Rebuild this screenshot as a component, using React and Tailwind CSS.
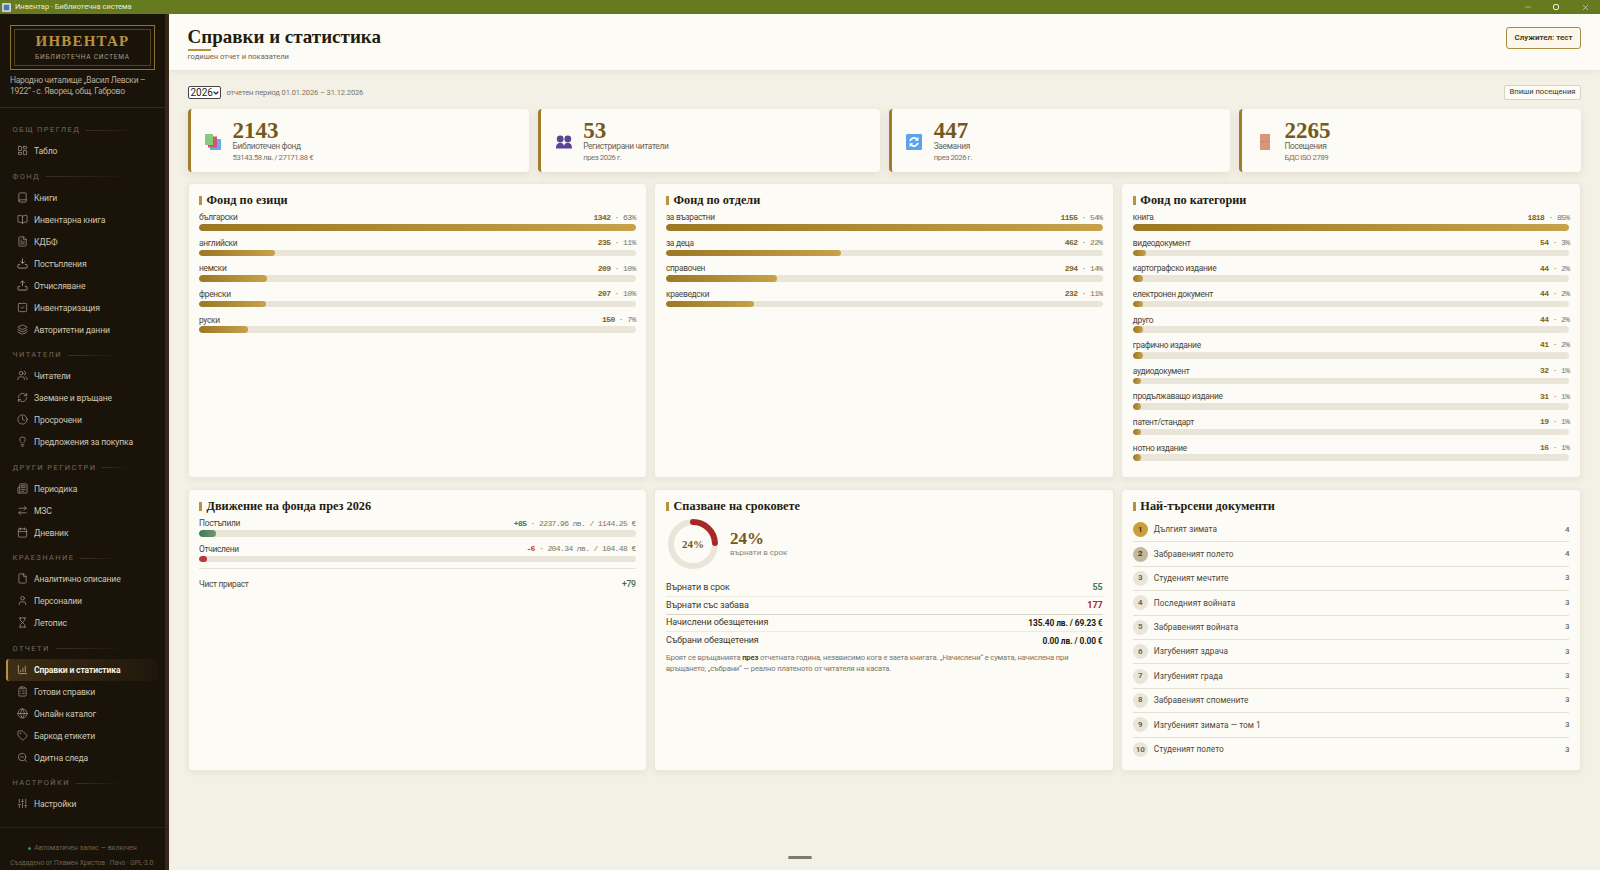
import { useState } from "react"
import {
  LayoutDashboard, Book, BookOpen, FileText, SquareCheck, Layers, Users, RefreshCw, Clock, Lightbulb,
  Newspaper, ArrowRightLeft, Calendar, File, User, Hourglass, ChartColumnIncreasing, ClipboardList,
  Globe, Tag, ZoomOut, SlidersVertical, Minus, X, ChevronDown,
} from "lucide-react"

const serif = "font-['Liberation_Serif',Georgia,serif]"
const mono = "font-['Liberation_Mono','DejaVu_Sans_Mono',monospace]"
const panel = "min-w-0 bg-[#fdfbf5] rounded-[4px] border border-[#ece8da] shadow-[0_2px_6px_rgba(90,70,30,0.08)] px-[10.5px] pt-[9px]"

function TrayDown({ className }) {
  return (
    <svg viewBox="0 0 24 24" className={className} fill="none" stroke="currentColor" strokeWidth="2" strokeLinecap="round" strokeLinejoin="round">
      <path d="M12 2v9" />
      <path d="m8 8 4 4 4-4" />
      <path d="M6 14H4a2 2 0 0 0-2 2v4a2 2 0 0 0 2 2h16a2 2 0 0 0 2-2v-4a2 2 0 0 0-2-2h-2" />
    </svg>
  )
}

function TrayUp({ className }) {
  return (
    <svg viewBox="0 0 24 24" className={className} fill="none" stroke="currentColor" strokeWidth="2" strokeLinecap="round" strokeLinejoin="round">
      <path d="M12 12V3" />
      <path d="m8 6 4-4 4 4" />
      <path d="M6 14H4a2 2 0 0 0-2 2v4a2 2 0 0 0 2 2h16a2 2 0 0 0 2-2v-4a2 2 0 0 0-2-2h-2" />
    </svg>
  )
}

const nav = [
  { title: "ОБЩ ПРЕГЛЕД", line: "w-[50px]", items: [{ label: "Табло", icon: LayoutDashboard }] },
  {
    title: "ФОНД", line: "w-[85px]", items: [
      { label: "Книги", icon: Book },
      { label: "Инвентарна книга", icon: BookOpen },
      { label: "КДБФ", icon: FileText },
      { label: "Постъпления", icon: TrayDown },
      { label: "Отчисляване", icon: TrayUp },
      { label: "Инвентаризация", icon: SquareCheck },
      { label: "Авторитетни данни", icon: Layers },
    ],
  },
  {
    title: "ЧИТАТЕЛИ", line: "w-[55px]", items: [
      { label: "Читатели", icon: Users },
      { label: "Заемане и връщане", icon: RefreshCw },
      { label: "Просрочени", icon: Clock },
      { label: "Предложения за покупка", icon: Lightbulb },
    ],
  },
  {
    title: "ДРУГИ РЕГИСТРИ", line: "w-[28px]", items: [
      { label: "Периодика", icon: Newspaper },
      { label: "МЗС", icon: ArrowRightLeft },
      { label: "Дневник", icon: Calendar },
    ],
  },
  {
    title: "КРАЕЗНАНИЕ", line: "w-[40px]", items: [
      { label: "Аналитично описание", icon: File },
      { label: "Персоналии", icon: User },
      { label: "Летопис", icon: Hourglass },
    ],
  },
  {
    title: "ОТЧЕТИ", line: "w-[70px]", items: [
      { label: "Справки и статистика", icon: ChartColumnIncreasing, active: true },
      { label: "Готови справки", icon: ClipboardList },
      { label: "Онлайн каталог", icon: Globe },
      { label: "Баркод етикети", icon: Tag },
      { label: "Одитна следа", icon: ZoomOut },
    ],
  },
  { title: "НАСТРОЙКИ", line: "w-[45px]", items: [{ label: "Настройки", icon: SlidersVertical }] },
]

const stats = [
  { value: "2143", label: "Библиотечен фонд", sub: "53143.58 лв. / 27171.88 €", icon: "books" },
  { value: "53", label: "Регистрирани читатели", sub: "през 2026 г.", icon: "people" },
  { value: "447", label: "Заемания", sub: "през 2026 г.", icon: "loop" },
  { value: "2265", label: "Посещения", sub: "БДС ISO 2789", icon: "door" },
]

const languages = [["български", 1342, "63%"], ["английски", 235, "11%"], ["немски", 209, "10%"], ["френски", 207, "10%"], ["руски", 150, "7%"]]
const departments = [["за възрастни", 1155, "54%"], ["за деца", 462, "22%"], ["справочен", 294, "14%"], ["краеведски", 232, "11%"]]
const categories = [
  ["книга", 1818, "85%"], ["видеодокумент", 54, "3%"], ["картографско издание", 44, "2%"], ["електронен документ", 44, "2%"],
  ["друго", 44, "2%"], ["графично издание", 41, "2%"], ["аудиодокумент", 32, "1%"], ["продължаващо издание", 31, "1%"],
  ["патент/стандарт", 19, "1%"], ["нотно издание", 16, "1%"],
]
const topDocs = [
  ["Дългият зимата", 4], ["Забравеният полето", 4], ["Студеният мечтите", 3], ["Последният войната", 3], ["Забравеният войната", 3],
  ["Изгубеният здрача", 3], ["Изгубеният града", 3], ["Забравеният спомените", 3], ["Изгубеният зимата — том 1", 3], ["Студеният полето", 3],
]

function StatIcon({ type }) {
  if (type === "books") {
    return (
      <svg viewBox="0 0 18 18" className="w-[18px] h-[18px]">
        <rect x="6" y="6" width="11" height="11" fill="#6fa8e8" />
        <rect x="4" y="3.5" width="9" height="11" fill="#d0566c" />
        <rect x="1" y="1" width="8" height="11" fill="#86c97c" />
      </svg>
    )
  }
  if (type === "people") {
    return (
      <svg viewBox="0 0 18 18" className="w-[18px] h-[18px]" fill="#5b4396">
        <circle cx="5.2" cy="6" r="3.4" />
        <circle cx="12.8" cy="6" r="3.4" />
        <path d="M1 15.5c0-3.4 1-5.5 4.2-5.5s4 2 4 5.5zM8.8 15.5c0-3.5.8-5.5 4-5.5s4.2 2.1 4.2 5.5z" />
      </svg>
    )
  }
  if (type === "loop") {
    return (
      <svg viewBox="0 0 18 18" className="w-[16px] h-[16px]">
        <rect width="18" height="18" rx="1.5" fill="#5da2ee" />
        <path d="M4.5 8a4.6 4.6 0 0 1 8-2" fill="none" stroke="#fff" strokeWidth="2" />
        <path d="M13.5 10a4.6 4.6 0 0 1-8 2" fill="none" stroke="#fff" strokeWidth="2" />
        <path d="M14 3v4.5H9.8zM4 15v-4.5h4.2z" fill="#fff" />
      </svg>
    )
  }
  return (
    <svg viewBox="0 0 10 16" className="w-[10px] h-[16px]">
      <rect width="10" height="16" fill="#d9967a" />
      <rect y="7" width="10" height="0.6" fill="#c27f64" />
    </svg>
  )
}

function StatCard({ stat }) {
  return (
    <div className="h-[63px] bg-[#fdfbf5] rounded-[4px] border-l-[3px] border-[#a07c2c] shadow-[0_3px_8px_rgba(90,70,30,0.1)] flex items-start">
      <div className="w-[42px] h-full flex items-center justify-center pl-[3px] pt-[2px]"><StatIcon type={stat.icon} /></div>
      <div className="pt-[11px]">
        <div className={`${serif} text-[23px] leading-[22px] font-bold text-[#73591c]`}>{stat.value}</div>
        <div className="text-[8.4px] leading-[11px] -mt-px tracking-[-0.35px] text-[#6a6458]">{stat.label}</div>
        <div className="text-[7.8px] leading-[11px] tracking-[-0.45px] text-[#7a7468]">{stat.sub}</div>
      </div>
    </div>
  )
}

function PanelTitle({ children }) {
  return (
    <div className="flex items-center gap-[4.5px] h-[14px] mb-[4px]">
      <span className="w-[3px] h-[9px] bg-[#b8923e]" />
      <h3 className={`${serif} text-[12.3px] font-bold text-[#231c10]`}>{children}</h3>
    </div>
  )
}

function Bar({ label, right, pct, fill }) {
  return (
    <div className="mb-[6px]">
      <div className="flex justify-between items-center h-[13px]">
        <span className="text-[8.4px] tracking-[-0.3px] text-[#4a4438]">{label}</span>
        {right}
      </div>
      <div className="h-[6.6px] rounded-full bg-[#e9e5d8] overflow-hidden">
        <div className={`h-full min-w-[8px] rounded-full ${fill}`} style={{ width: `${pct}%` }} />
      </div>
    </div>
  )
}

function DistPanel({ title, rows }) {
  const max = rows[0][1]
  return (
    <section className={panel}>
      <PanelTitle>{title}</PanelTitle>
      {rows.map((row) => (
        <Bar
          key={row[0]}
          label={row[0]}
          pct={(row[1] / max) * 100}
          fill="bg-gradient-to-r from-[#9c7724] to-[#c7a24a]"
          right={
            <span className={`${mono} text-[8px] tracking-[-0.6px] text-[#7a7468]`}>
              <span className="font-semibold text-[#7a6428]">{row[1]}</span> · {row[2]}
            </span>
          }
        />
      ))}
    </section>
  )
}

function Donut() {
  const r = 22
  const c = 2 * Math.PI * r
  return (
    <div className="relative w-[50px] h-[50px]">
      <svg viewBox="0 0 50 50" className="w-[50px] h-[50px] -rotate-90">
        <circle cx="25" cy="25" r={r} fill="none" stroke="#e9e5d8" strokeWidth="6" />
        <circle cx="25" cy="25" r={r} fill="none" stroke="#a8282a" strokeWidth="6" strokeLinecap="round" strokeDasharray={`${c * 0.24} ${c}`} />
      </svg>
      <div className={`${serif} absolute inset-0 flex items-center justify-center text-[11px] font-bold text-[#73591c]`}>24%</div>
    </div>
  )
}

function NavSection({ section }) {
  return (
    <div className="mt-[7.5px]">
      <div className="flex items-center h-[13px] mb-1 pl-[12.5px]">
        <span className="text-[7.5px] tracking-[1.4px] text-[#75695a] whitespace-nowrap">{section.title}</span>
        <span className={`h-px ml-[6px] bg-gradient-to-r from-[#3d3020] to-transparent ${section.line}`} />
      </div>
      {section.items.map((item) => {
        const Icon = item.icon
        return (
          <div
            key={item.label}
            className={`h-[22px] ml-[6px] mr-[7px] flex items-center pl-[9px] gap-[6px] rounded-[3px] border-l-2 text-[8.6px] tracking-[-0.15px] ${item.active ? "border-[#b8923e] bg-gradient-to-r from-[#3e2e14] to-[#20170c] text-[#f5efdf] font-bold" : "border-transparent text-[#cfc6b0]"}`}
          >
            <Icon className={`w-[11px] h-[11px] shrink-0 -translate-y-px ${item.active ? "text-[#cdb985]" : "text-[#a39a84]"}`} strokeWidth={1.6} />
            <span className="whitespace-nowrap">{item.label}</span>
          </div>
        )
      })}
    </div>
  )
}

function Sidebar() {
  return (
    <aside className="w-[169px] shrink-0 h-full bg-[#1a130a] border-r-4 border-[#35281a] flex flex-col overflow-hidden">
      <div className="mx-[10px] mt-[11px] h-[45px] border border-[#8c7136] p-[3px]">
        <div className="h-full border border-[#54431f] flex flex-col items-center justify-center">
          <div className={`${serif} text-[15px] leading-[16px] font-bold tracking-[1.2px] text-[#b8923e]`}>ИНВЕНТАР</div>
          <div className="text-[6.5px] leading-[9px] mt-[4px] tracking-[0.8px] text-[#a79c86]">БИБЛИОТЕЧНА СИСТЕМА</div>
        </div>
      </div>
      <p className="mx-[10px] mt-[5px] text-[8.5px] leading-[11px] tracking-[-0.3px] text-[#b5ac98]">Народно читалище „Васил Левски –<br />1922“ - с. Яворец, общ. Габрово</p>
      <div className="mt-[10px] h-px bg-[#33281a]" />
      <nav className="mt-[8px] flex-1">
        {nav.map((section) => <NavSection key={section.title} section={section} />)}
      </nav>
      <div className="h-px bg-[#2d2316]" />
      <div className="h-[42px] pt-[16px] text-center text-[7px] leading-[9px] text-[#6d6352]">
        <div className="flex items-center justify-center gap-[3px]">
          <span className="w-[3px] h-[3px] rounded-full bg-[#4b8a5e]" />
          <span>Автоматичен запис — включен</span>
        </div>
        <div className="mt-[6px] text-[6.5px] whitespace-nowrap">Създадено от Пламен Христов · Пачо · GPL-3.0·</div>
      </div>
    </aside>
  )
}

export default function App() {
  const [year, setYear] = useState("2026")
  return (
    <div className="w-[1600px] h-[870px] overflow-hidden flex flex-col font-['Roboto','Open_Sans',sans-serif] bg-[#f3f0e6]">
      <div className="h-[14px] shrink-0 bg-[#667a20] flex items-center text-[#e9eed2] text-[7.5px]">
        <svg viewBox="0 0 10 10" className="w-[9px] h-[9px] ml-[2px] mr-[4px]">
          <rect width="10" height="10" rx="1" fill="#c6d4e6" />
          <rect x="2" y="2" width="6" height="6" fill="#4d78a8" />
        </svg>
        <span>Инвентар · Библиотечна система</span>
        <div className="ml-auto flex items-center text-[#eef2dc]">
          <Minus className="w-[8px] h-[8px] mr-[21px]" strokeWidth={1.5} />
          <span className="w-[6px] h-[6px] border border-[#eef2dc] rounded-[2px] mr-[22px]" />
          <X className="w-[9px] h-[9px] mr-[10px]" strokeWidth={1.5} />
        </div>
      </div>
      <div className="flex-1 flex min-h-0">
        <Sidebar />
        <main className="relative flex-1 min-w-0 flex flex-col">
          <header className="h-[56px] shrink-0 bg-[#fdfbf5] shadow-[0_1px_6px_rgba(90,70,30,0.1)] flex items-start justify-between pl-[18.5px] pr-[19px]">
            <div>
              <h1 className={`${serif} mt-[13px] text-[19px] leading-[20px] font-bold text-[#231c10]`}>Справки и статистика</h1>
              <div className="w-[23px] h-[2px] mt-[2px] bg-[#b8923e]" />
              <div className="text-[7.6px] leading-[10px] mt-px text-[#6a6458]">годишен отчет и показатели</div>
            </div>
            <button className="mt-[13px] h-[22px] w-[75px] rounded-[3px] border border-[#a88a44] bg-[#fbf7ea] text-[8px] font-semibold text-[#3c3426]">Служител: тест</button>
          </header>
          <div className="flex-1 pl-[18.5px] pr-[19px]">
            <div className="h-[39px] pt-[6px] flex items-center">
              <div className="relative w-[33px] h-[13px]">
                <select value={year} onChange={(e) => setYear(e.target.value)} className="block appearance-none w-full h-full pl-[2px] border border-[#444] bg-white rounded-[2px] text-[10px] leading-[11px] text-[#222]">
                  <option>2026</option>
                  <option>2025</option>
                </select>
                <ChevronDown className="absolute right-px top-[3px] w-[8px] h-[8px] text-[#222] pointer-events-none" strokeWidth={3.5} />
              </div>
              <span className="ml-[6px] text-[7.5px] tracking-[-0.1px] text-[#7a7468]">отчетен период 01.01.2026 – 31.12.2026</span>
              <button className="ml-auto -mt-px h-[15px] w-[77px] rounded-[2px] border border-[#d8d3c2] bg-[#fdfbf5] text-[7.6px] text-[#3c3426]">Впиши посещения</button>
            </div>
            <div className="grid grid-cols-4 gap-[9px]">
              {stats.map((stat) => <StatCard key={stat.value} stat={stat} />)}
            </div>
            <div className="grid grid-cols-3 gap-[7.3px] mt-[11px] h-[295px]">
              <DistPanel title="Фонд по езици" rows={languages} />
              <DistPanel title="Фонд по отдели" rows={departments} />
              <DistPanel title="Фонд по категории" rows={categories} />
            </div>
            <div className="grid grid-cols-3 gap-[7.3px] mt-[11px] h-[282px]">
              <section className={panel}>
                <PanelTitle>Движение на фонда през 2026</PanelTitle>
                <Bar
                  label="Постъпили"
                  pct={4}
                  fill="bg-gradient-to-r from-[#3f7a52] to-[#6c9a76]"
                  right={<span className={`${mono} text-[8px] tracking-[-0.6px] text-[#7a7468]`}><span className="font-semibold text-[#3f7a52]">+85</span> · 2237.96 лв. / 1144.25 €</span>}
                />
                <Bar
                  label="Отчислени"
                  pct={0.3}
                  fill="bg-[#b83a3a]"
                  right={<span className={`${mono} text-[8px] tracking-[-0.6px] text-[#7a7468]`}><span className="font-semibold text-[#b83a3a]">-6</span> · 204.34 лв. / 104.48 €</span>}
                />
                <div className="h-px bg-[#e6e2d5] mt-[3px]" />
                <div className="flex justify-between items-center mt-[9px] text-[8.4px] tracking-[-0.3px] text-[#4e483c]">
                  <span>Чист прираст</span>
                  <span className="text-[8.6px] font-medium text-[#3f6a50]">+79</span>
                </div>
              </section>
              <section className={panel}>
                <PanelTitle>Спазване на сроковете</PanelTitle>
                <div className="flex items-center gap-[12px] ml-[2px] mt-[6px]">
                  <Donut />
                  <div>
                    <div className={`${serif} text-[17px] leading-[18px] font-bold text-[#73591c]`}>24%</div>
                    <div className="text-[8px] leading-[10px] text-[#8a8474]">върнати в срок</div>
                  </div>
                </div>
                <div className="mt-[11px] text-[9px] tracking-[-0.1px] text-[#3e382c]">
                  <div className="h-[17.4px] flex justify-between items-center border-b border-[#eeeadd]"><span>Върнати в срок</span><b className="text-[#3f7a52]">55</b></div>
                  <div className="h-[17.4px] flex justify-between items-center border-b border-[#d8d4c6]"><span>Върнати със забава</span><b className="text-[#a8282a]">177</b></div>
                  <div className="h-[17.4px] flex justify-between items-center border-b border-[#eeeadd]"><span>Начислени обезщетения</span><b className="text-[8.4px] text-[#231c10]">135.40 лв. / 69.23 €</b></div>
                  <div className="h-[17.4px] flex justify-between items-center"><span>Събрани обезщетения</span><b className="text-[8.4px] text-[#231c10]">0.00 лв. / 0.00 €</b></div>
                </div>
                <p className="mt-[2.5px] text-[7.6px] leading-[11px] tracking-[-0.15px] text-[#7a7468]">
                  Броят се връщанията <b className="text-[#4e483c]">през</b> отчетната година, независимо кога е заета книгата. „Начислени“ е сумата, начислена при връщането; „събрани“ — реално платеното от читателя на касата.
                </p>
              </section>
              <section className={panel}>
                <PanelTitle>Най-търсени документи</PanelTitle>
                <div className="mt-[5px]">
                  {topDocs.map((doc, i) => (
                    <div key={i} className={`h-[24.4px] flex items-center ${i < 9 ? "border-b border-[#e4e0d3]" : ""}`}>
                      <span className={`w-[15px] h-[15px] rounded-full flex items-center justify-center text-[8px] font-bold ${i === 0 ? "bg-[#c8a03f] text-[#3c3426]" : i === 1 ? "bg-[#c4b89c] text-[#3c3426]" : "bg-[#e9e5d8] text-[#6f675a]"}`}>{i + 1}</span>
                      <span className="ml-[6px] text-[8.3px] text-[#4e483c]">{doc[0]}</span>
                      <b className="ml-auto text-[8px] font-medium text-[#6f675a]">{doc[1]}</b>
                    </div>
                  ))}
                </div>
              </section>
            </div>
          </div>
          <div className="absolute left-[619px] bottom-[11px] w-[24px] h-[3px] rounded-full bg-[#7d7a72]" />
        </main>
      </div>
    </div>
  )
}
